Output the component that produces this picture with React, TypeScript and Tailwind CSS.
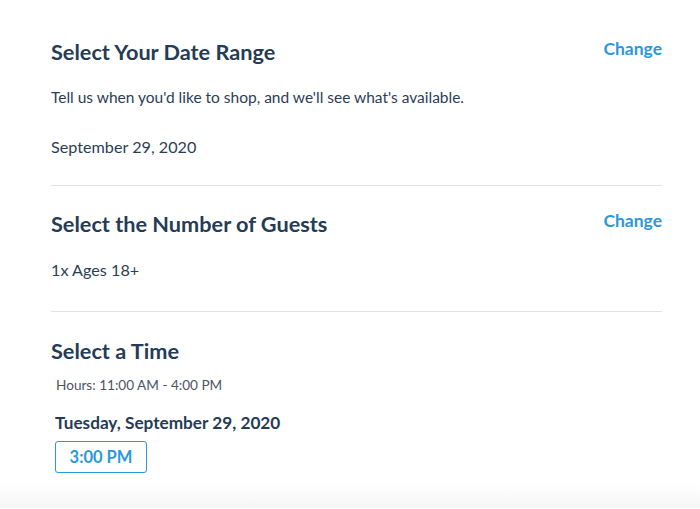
import React from 'react';

const FONT = { fontFamily: 'Lato, "Open Sans", sans-serif' };

function ChangeLink() {
  return (
    <button type="button" className="text-[17.5px] font-bold leading-[22px] text-[#2b98dc]">
      Change
    </button>
  );
}

export default function App() {
  return (
    <div className="min-h-[509px] w-[700px] bg-white text-[#253b56]" style={FONT}>
      <div className="pl-[51px] pr-[38px]">
        <section className="border-b border-[#dfe3e8] pt-[38px] pb-[26px]">
          <div className="flex items-start justify-between">
            <h2 className="text-[21.7px] font-bold leading-[28px]">Select Your Date Range</h2>
            <ChangeLink />
          </div>
          <p className="mt-[22px] text-[15.5px] leading-[18px] text-[#2c3e55]">
            Tell us when you'd like to shop, and we'll see what's available.
          </p>
          <p className="mt-[29px] text-[16.2px] leading-[24px] text-[#2c3e55]">September 29, 2020</p>
        </section>

        <section className="border-b border-[#dfe3e8] pt-[24px] pb-[29px]">
          <div className="flex items-start justify-between">
            <h2 className="text-[21.7px] font-bold leading-[28px]">Select the Number of Guests</h2>
            <ChangeLink />
          </div>
          <p className="mt-[20px] text-[16.2px] leading-[24px] text-[#2c3e55]">1x Ages 18+</p>
        </section>

        <section className="pt-[25px]">
          <h2 className="text-[21.7px] font-bold leading-[28px]">Select a Time</h2>
          <p className="mt-[11px] pl-[5px] text-[13.6px] leading-[18px] text-[#4a5563]">
            Hours: 11:00 AM - 4:00 PM
          </p>
          <div className="pl-[4px]">
            <p className="mt-[18px] text-[17.2px] font-bold leading-[22px]">Tuesday, September 29, 2020</p>
            <button
              type="button"
              className="mt-[7px] h-[32px] w-[92px] rounded-[3px] border border-[#2b98dc] text-[16.5px] font-bold text-[#2b98dc]"
            >
              3:00 PM
            </button>
          </div>
        </section>
      </div>
      <div className="mt-[10px] h-[25px] bg-gradient-to-b from-white to-[#f6f6f6]" />
    </div>
  );
}
